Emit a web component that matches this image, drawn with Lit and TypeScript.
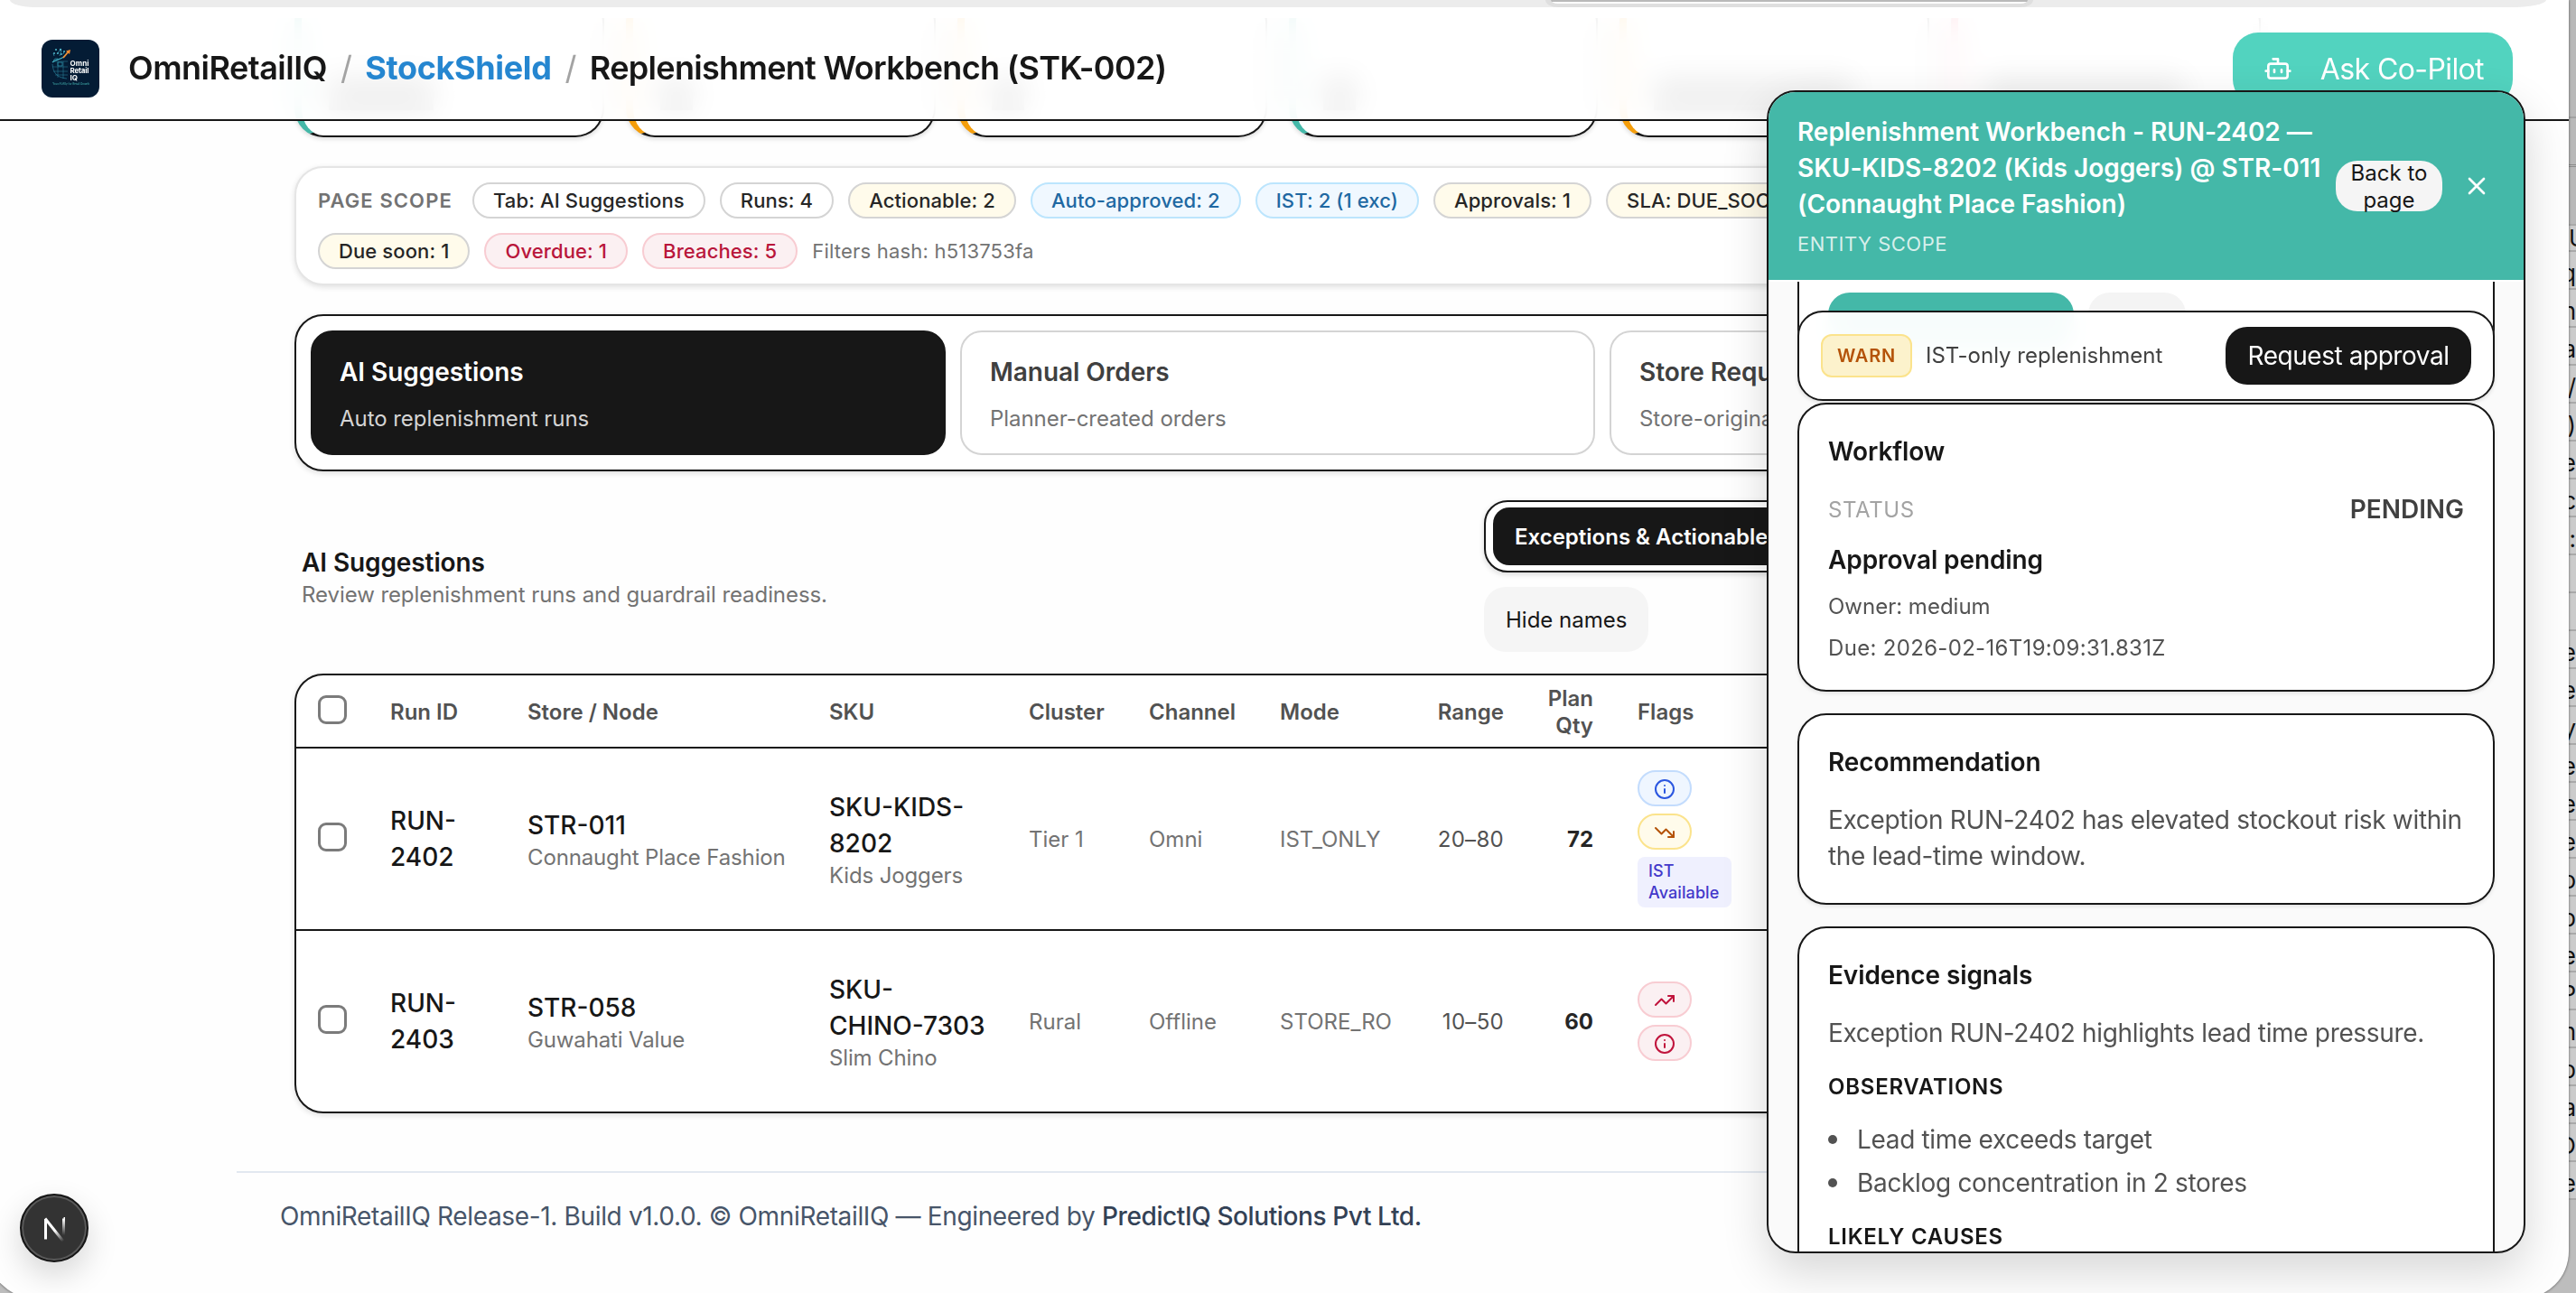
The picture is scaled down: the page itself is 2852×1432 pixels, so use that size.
import { LitElement, html, css, svg } from "lit";
import { customElement, property } from "lit/decorators.js";
import { classMap } from "lit/directives/class-map.js";

const ICONS = {
  info: svg`<circle cx="12" cy="12" r="10" /><path d="M12 16v-4M12 8h.01" />`,
  down: svg`<path d="M16 17h6v-6" /><path d="m22 17-8.5-8.5-5 5L2 7" />`,
  up: svg`<path d="M16 7h6v6" /><path d="m22 7-8.5 8.5-5-5L2 17" />`,
  bot: svg`<path d="M12 8V4H8" /><rect width="16" height="12" x="4" y="8" rx="2" /><path d="M2 14h2M20 14h2M15 13v2M9 13v2" />`,
  close: svg`<path d="M18 6 6 18M6 6l12 12" />`,
};

type IconName = keyof typeof ICONS;

@customElement("ui-icon")
export class UiIcon extends LitElement {
  static styles = css`
    :host {
      display: block;
      width: 24px;
      height: 24px;
      flex: none;
    }
    svg {
      display: block;
      width: 100%;
      height: 100%;
      fill: none;
      stroke: currentColor;
      stroke-width: 2;
      stroke-linecap: round;
      stroke-linejoin: round;
    }
  `;

  @property()
  public name: IconName = "info";

  render() {
    return html`<svg viewBox="0 0 24 24">${ICONS[this.name]}</svg>`;
  }
}

const KPIS = [
  { tone: "teal", ink: "wide" },
  { tone: "amber", ink: "small" },
  { tone: "amber", ink: "small" },
  { tone: "teal", ink: "small" },
  { tone: "amber", ink: "full" },
  { tone: "rose", ink: "full" },
];

const CHIPS = [
  { label: "Tab: AI Suggestions", tone: "plain" },
  { label: "Runs: 4", tone: "plain" },
  { label: "Actionable: 2", tone: "warn" },
  { label: "Auto-approved: 2", tone: "info" },
  { label: "IST: 2 (1 exc)", tone: "info" },
  { label: "Approvals: 1", tone: "warn" },
  { label: "SLA: DUE_SOON", tone: "warn" },
];

const CHIPS_BELOW = [
  { label: "Due soon: 1", tone: "warn" },
  { label: "Overdue: 1", tone: "danger" },
  { label: "Breaches: 5", tone: "danger" },
];

const TABS = [
  { title: "AI Suggestions", text: "Auto replenishment runs", active: true },
  { title: "Manual Orders", text: "Planner-created orders", active: false },
  { title: "Store Requests", text: "Store-originated requests", active: false },
];

const ROWS = [
  {
    run: ["RUN-", "2402"],
    store: "STR-011",
    storeName: "Connaught Place Fashion",
    sku: ["SKU-KIDS-", "8202"],
    skuName: "Kids Joggers",
    cluster: "Tier 1",
    channel: "Omni",
    mode: "IST_ONLY",
    range: "20–80",
    qty: "72",
    flags: [
      { icon: "info", tone: "blue" },
      { icon: "down", tone: "yellow" },
    ],
    ist: true,
  },
  {
    run: ["RUN-", "2403"],
    store: "STR-058",
    storeName: "Guwahati Value",
    sku: ["SKU-", "CHINO-7303"],
    skuName: "Slim Chino",
    cluster: "Rural",
    channel: "Offline",
    mode: "STORE_RO",
    range: "10–50",
    qty: "60",
    flags: [
      { icon: "up", tone: "red" },
      { icon: "info", tone: "red" },
    ],
    ist: false,
  },
];

// Rows of the window that lies behind this one
const BEHIND = [
  "q", "n", "ta", "/", ")", "e", "oc", ":", "", "", "ge", "e", "y",
  "e", "e", "e", "o", "p", "ee", "P", "n", "b", "a", "O", "te",
];

@customElement("app-drawer")
export class AppDrawer extends LitElement {
  static styles = css`
    :host {
      display: flex;
      flex-direction: column;
      box-sizing: border-box;
      border: 2px solid #171717;
      border-radius: 32px;
      background: #fafafa;
      overflow: hidden;
      box-shadow: 0 20px 50px rgba(0, 0, 0, 0.16);
      font-size: 28px;
      line-height: 40px;
      color: #525252;
    }
    * {
      box-sizing: border-box;
    }

    /* Header */
    .head {
      display: flex;
      align-items: center;
      height: 208px;
      flex: none;
      padding: 0 36px 0 32px;
      background: #44b8a8;
      color: #fff;
    }
    .title {
      width: 596px;
      font-weight: 600;
      letter-spacing: -0.04px;
      white-space: nowrap;
    }
    .scope {
      margin-top: 8px;
      font-size: 22px;
      line-height: 32px;
      font-weight: 400;
      letter-spacing: 0.5px;
      color: rgba(255, 255, 255, 0.8);
    }
    .back {
      display: flex;
      align-items: center;
      justify-content: center;
      width: 118px;
      height: 56px;
      padding-top: 2px;
      border-radius: 24px;
      background: #f5f5f5;
      color: #171717;
      font-size: 24px;
      line-height: 30px;
      text-align: center;
    }
    .close {
      width: 32px;
      height: 32px;
      margin-left: 22px;
    }

    /* Body */
    .body {
      flex: 1;
      min-height: 0;
      padding: 0 32px;
      border-top: 2px solid #fff;
      overflow: hidden;
    }
    .card {
      display: flex;
      flex-direction: column;
      padding: 32px;
      border: 2px solid #171717;
      border-radius: 32px;
      background: #fff;
      box-shadow: 0 2px 4px rgba(0, 0, 0, 0.1);
      margin-bottom: 24px;
    }
    .top {
      flex-direction: row;
      gap: 16px;
      height: 96px;
      margin: 0 0 -64px;
      padding: 12px 32px 0;
      border-top: 0;
      border-bottom: 0;
      border-radius: 0;
      box-shadow: none;
      background: linear-gradient(#fff 70px, transparent 70px);
      border-image: linear-gradient(#171717 60px, transparent 60px) 1;
    }
    .ghost {
      height: 64px;
      border-radius: 24px;
      background: #f4f4f4;
      width: 108px;
    }
    .ghost.teal {
      background: #44b8a8;
      width: 272px;
    }
    .bar {
      position: relative;
      display: flex;
      align-items: center;
      gap: 15px;
      height: 100px;
      padding: 0 24px;
      margin-bottom: 2px;
      border: 2px solid #171717;
      border-radius: 28px;
      background: rgba(255, 255, 255, 0.96);
      backdrop-filter: blur(12px);
      box-shadow: 0 2px 4px rgba(0, 0, 0, 0.12);
      font-size: 24px;
      color: #404040;
    }
    .warn {
      display: flex;
      align-items: center;
      justify-content: center;
      width: 101px;
      height: 48px;
      border: 2px solid #fbe38c;
      border-radius: 12px;
      background: #fcf2cc;
      color: #b45309;
      font-size: 20px;
      font-weight: 600;
      letter-spacing: 0.04em;
    }
    .approve {
      margin-left: auto;
      width: 272px;
      height: 64px;
      line-height: 64px;
      border-radius: 24px;
      background: #171717;
      color: #fff;
      font-size: 28px;
      letter-spacing: -0.45px;
      text-align: center;
    }
    .heading {
      color: #171717;
      font-weight: 600;
      letter-spacing: -0.1px;
      margin-bottom: 24px;
    }
    .text {
      letter-spacing: -0.33px;
      white-space: nowrap;
    }
    .status {
      display: flex;
      justify-content: space-between;
      font-weight: 600;
      letter-spacing: -0.05px;
      color: #404040;
    }
    .status .label {
      height: 40px;
      font-size: 24px;
      line-height: 42px;
      font-weight: 400;
      letter-spacing: 0.6px;
      color: #a3a3a3;
    }
    .state {
      color: #171717;
      font-weight: 600;
      letter-spacing: -0.1px;
      margin-top: 16px;
    }
    .meta {
      height: 30px;
      font-size: 24px;
      line-height: 32px;
      margin-top: 16px;
    }
    .due {
      letter-spacing: 0.32px;
    }
    .caps {
      height: 30px;
      margin: 24px 0;
      color: #171717;
      font-size: 24px;
      line-height: 32px;
      font-weight: 600;
      letter-spacing: 0.75px;
    }
    .list {
      display: flex;
      flex-direction: column;
      gap: 8px;
    }
    .item {
      display: flex;
      align-items: center;
      gap: 22px;
    }
    .item::before {
      content: "";
      width: 10px;
      height: 10px;
      border-radius: 50%;
      background: #525252;
    }
  `;

  render() {
    return html`
      <div class="head">
        <div class="title">
          Replenishment Workbench - RUN-2402 —<br />SKU-KIDS-8202 (Kids Joggers)
          @ STR-011<br />(Connaught Place Fashion)
          <div class="scope">ENTITY SCOPE</div>
        </div>
        <div class="back">Back to<br />page</div>
        <ui-icon class="close" name="close"></ui-icon>
      </div>
      <div class="body">
        <div class="card top">
          <div class="ghost teal"></div>
          <div class="ghost"></div>
        </div>
        <div class="bar">
          <span class="warn">WARN</span>
          <span>IST-only replenishment</span>
          <span class="approve">Request approval</span>
        </div>
        <section class="card">
          <div class="heading">Workflow</div>
          <div class="status">
            <span class="label">STATUS</span><span>PENDING</span>
          </div>
          <div class="state">Approval pending</div>
          <div class="meta">Owner: medium</div>
          <div class="meta due">Due: 2026-02-16T19:09:31.831Z</div>
        </section>
        <section class="card">
          <div class="heading">Recommendation</div>
          <div class="text">
            Exception RUN-2402 has elevated stockout risk within<br />the
            lead-time window.
          </div>
        </section>
        <section class="card">
          <div class="heading">Evidence signals</div>
          <div class="text">
            Exception RUN-2402 highlights lead time pressure.
          </div>
          <div class="caps">OBSERVATIONS</div>
          <div class="list">
            <div class="item text">Lead time exceeds target</div>
            <div class="item text">Backlog concentration in 2 stores</div>
          </div>
          <div class="caps">LIKELY CAUSES</div>
        </section>
      </div>
    `;
  }
}

@customElement("app-root")
export class AppRoot extends LitElement {
  static styles = css`
    :host {
      display: block;
      position: relative;
      width: 2852px;
      height: 1432px;
      overflow: hidden;
      background: #bdbdbd;
      font-family: Inter, "Liberation Sans", sans-serif;
      color: #171717;
    }
    * {
      box-sizing: border-box;
    }

    /* Window behind */
    .behind {
      position: absolute;
      top: 0;
      right: 0;
      width: 8px;
      overflow: hidden;
      padding-top: 129px;
      font-size: 26px;
      color: #111;
      background: linear-gradient(#b9b9b9 0 248px, #cbcbcb 248px 1330px, #c2c2c2 1330px);
    }
    .behind .gap {
      height: 56px;
      border-top: 2px solid #a2a2a2;
      border-bottom: 3px double #8c8c8c;
    }
    .behind .line {
      display: flex;
      justify-content: flex-end;
      align-items: center;
      height: 42px;
      padding-top: 6px;
      border-bottom: 2px solid #a9a9a9;
    }
    .behind .line.first {
      justify-content: flex-start;
      margin-top: 63px;
      height: 31px;
      padding: 0;
      border-top: 2px solid #a9a9a9;
    }

    /* Window */
    .window {
      position: relative;
      width: 2857px;
      height: 1438px;
      margin-left: -13px;
      padding-left: 13px;
      border-radius: 0 0 52px 52px;
      background: #fefefe;
      box-shadow: 0 0 3px rgba(0, 0, 0, 0.6);
      overflow: hidden;
    }
    .chrome {
      position: relative;
      z-index: 2;
      height: 20px;
      background: #fff;
    }
    .toolbar {
      display: flex;
      width: 2808px;
      height: 8px;
      margin-left: 11px;
      padding-left: 1700px;
      background: #ececec;
      border-radius: 0 0 40px 30px / 0 0 8px 8px;
    }
    .address {
      width: 540px;
      height: 8px;
      border: solid #dfdfdf;
      border-width: 0 6px 4px;
      border-radius: 0 0 14px 14px / 0 0 8px 8px;
      background: linear-gradient(#b9b9b9 2px, #fff 2px);
    }
    .header {
      position: relative;
      z-index: 2;
      display: flex;
      align-items: center;
      height: 114px;
      padding: 0 62px 0 46px;
      border-bottom: 2px solid #171717;
      background: rgba(255, 255, 255, 0.9);
      backdrop-filter: blur(16px);
    }
    .logo {
      width: 64px;
      height: 64px;
      margin-right: 32px;
    }
    .crumbs {
      display: flex;
      gap: 15px;
      font-size: 36px;
      line-height: 46px;
      padding-bottom: 2px;
      font-weight: 600;
      white-space: nowrap;
      letter-spacing: -0.019em;
    }
    .brand {
      letter-spacing: -0.014em;
    }
    .slash {
      color: #a3a3a3;
      font-weight: 400;
    }
    .link {
      color: #2586d0;
      font-weight: 700;
      letter-spacing: -0.01em;
    }
    .copilot {
      display: flex;
      align-items: center;
      justify-content: space-between;
      width: 310px;
      height: 80px;
      margin-left: auto;
      padding: 0 32px 0 34px;
      border-radius: 28px;
      background: #52d3bf;
      color: #fff;
      font-size: 32px;
      letter-spacing: -0.6px;
    }
    .copilot ui-icon {
      width: 32px;
      height: 32px;
    }

    /* Content */
    .main {
      width: 2177px;
      margin-left: 326px;
    }
    .kpis {
      display: grid;
      grid-template-columns: repeat(6, 1fr);
      gap: 24px;
      height: 160px;
      margin-top: -142px;
    }
    .kpi {
      padding: 92px 30px 0;
      border: 2px solid #171717;
      border-left-width: 8px;
      border-radius: 32px;
      background: #fff;
      box-shadow: 0 2px 5px rgba(0, 0, 0, 0.14);
    }
    .teal {
      border-left-color: #44b8a8;
    }
    .amber {
      border-left-color: #f59e0b;
    }
    .rose {
      border-left-color: #f43f5e;
    }
    .ink {
      width: 36px;
      height: 36px;
      background: #555;
    }
    .ink.wide {
      width: 116px;
    }
    .ink.full {
      width: 220px;
    }
    .scope {
      height: 132px;
      margin-top: 32px;
      padding: 16px 24px;
      display: flex;
      flex-direction: column;
      gap: 16px;
      border: 2px solid #e5e5e5;
      border-radius: 32px;
      background: #fff;
      box-shadow: 0 2px 6px rgba(0, 0, 0, 0.12);
      font-size: 22px;
    }
    .line {
      display: flex;
      align-items: center;
      gap: 16px;
      white-space: nowrap;
    }
    .scope-label {
      width: 155px;
      font-weight: 600;
      letter-spacing: 0.05em;
      color: #737373;
    }
    .hash {
      color: #737373;
      letter-spacing: 0.2px;
    }
    .chip {
      display: flex;
      align-items: center;
      height: 40px;
      padding: 0 21px;
      border: 2px solid #d4d4d4;
      border-radius: 20px;
      font-weight: 500;
      letter-spacing: 0.11px;
      color: #262626;
    }
    .chip.warn {
      background: #fffbeb;
    }
    .chip.info {
      background: #f0f8ff;
      border-color: #bce5fd;
      color: #2068a2;
    }
    .chip.danger {
      background: #fbf0f2;
      border-color: #f8ccd2;
      color: #b9163b;
    }
    .tabs {
      display: grid;
      grid-template-columns: repeat(3, 1fr);
      gap: 16px;
      height: 174px;
      margin-top: 32px;
      padding: 16px;
      border: 2px solid #171717;
      border-radius: 32px;
      background: #fff;
      box-shadow: 0 2px 6px rgba(0, 0, 0, 0.14);
    }
    .tab {
      padding: 24px 31px 20px;
      border: 2px solid #d4d4d4;
      border-radius: 24px;
      font-size: 28px;
      line-height: 40px;
      font-weight: 600;
      letter-spacing: -0.05px;
      color: #404040;
    }
    .tab .sub {
      margin-top: 17px;
      font-size: 24px;
      line-height: 30px;
      font-weight: 400;
      letter-spacing: -0.05px;
      color: #737373;
    }
    .tab.active {
      padding-left: 30px;
      background: #171717;
      border-color: #171717;
      color: #fff;
    }
    .tab.active .sub {
      color: #d4d4d4;
    }
    .section {
      display: flex;
      align-items: center;
      justify-content: space-between;
      height: 168px;
      margin-top: 32px;
      padding-left: 8px;
    }
    .section-title {
      font-size: 28px;
      line-height: 40px;
      font-weight: 600;
      letter-spacing: -0.1px;
    }
    .section-sub {
      height: 30px;
      font-size: 24px;
      line-height: 32px;
      letter-spacing: -0.07px;
      color: #737373;
    }
    .controls {
      display: flex;
      flex-direction: column;
      align-items: flex-start;
      gap: 16px;
      width: 860px;
      font-size: 24px;
    }
    .segment {
      height: 80px;
      width: 600px;
      padding: 6px 8px;
      border: 2px solid #171717;
      border-radius: 26px;
      background: #fff;
      box-shadow: 0 2px 6px rgba(0, 0, 0, 0.16);
    }
    .segment-on {
      height: 64px;
      line-height: 66px;
      padding-left: 24px;
      border-radius: 18px;
      background: #171717;
      color: #fff;
      font-weight: 600;
    }
    .hide {
      height: 72px;
      line-height: 74px;
      padding: 0 24px;
      border-radius: 24px;
      background: #f5f5f5;
    }

    /* Table */
    .table {
      margin-top: 24px;
      border: 2px solid #171717;
      border-radius: 32px;
      background: #fff;
      box-shadow: 0 2px 6px rgba(0, 0, 0, 0.14);
      font-size: 24px;
      line-height: 30px;
      color: #737373;
      white-space: nowrap;
    }
    .row {
      display: grid;
      grid-template-columns: 80px 152px 334px 221px 133px 145px 160px 136px 99px 1fr;
      align-items: center;
      height: 202px;
      border-top: 2px solid #171717;
    }
    .row > div {
      padding: 0 24px;
    }
    .row > .cell {
      padding-top: 2px;
    }
    .row > div:last-child {
      padding-left: 25px;
    }
    .row.head {
      height: 79px;
      border-top: 0;
      color: #525252;
      font-weight: 600;
    }
    .row.head > .lift {
      padding-bottom: 4px;
    }
    .right {
      text-align: right;
    }
    .check {
      width: 32px;
      height: 32px;
      border: 3px solid #7b7b7b;
      border-radius: 9px;
    }
    .row:not(.head) .check {
      margin-top: -4px;
    }
    .strong {
      font-size: 28px;
      line-height: 40px;
      font-weight: 500;
      color: #171717;
    }
    .name {
      height: 30px;
      line-height: 32px;
      letter-spacing: -0.14px;
    }
    .range {
      color: #525252;
      letter-spacing: 0.3px;
    }
    .qty {
      font-weight: 700;
      color: #262626;
    }
    .flags {
      display: flex;
      flex-direction: column;
      align-items: flex-start;
      gap: 8px;
    }
    .flag {
      padding: 7px 16px 5px;
      height: 40px;
      border: 2px solid;
      border-radius: 20px;
    }
    .flag.blue {
      background: #eff6ff;
      border-color: #c3dcfd;
    }
    .flag.yellow {
      background: #fffbeb;
      border-color: #fbe38c;
    }
    .flag.red {
      background: #fbf0f2;
      border-color: #f8ccd2;
    }
    .blue ui-icon {
      color: #2a56e0;
    }
    .yellow ui-icon {
      color: #b45309;
    }
    .red ui-icon {
      color: #c0143c;
    }
    .ist {
      width: 104px;
      padding: 4px 12px;
      border-radius: 8px;
      background: #eff0fe;
      color: #4338ca;
      font-size: 18px;
      line-height: 24px;
      font-weight: 500;
      letter-spacing: 0.1px;
    }

    /* Footer */
    .footer {
      margin: 64px 262px 0;
      padding: 26px 48px;
      border-top: 2px solid #e2e8f0;
      font-size: 28px;
      line-height: 44px;
      letter-spacing: -0.35px;
      color: #475569;
    }
    .company {
      color: #334155;
      font-weight: 500;
      letter-spacing: -0.4px;
    }

    /* Overlays */
    .badge {
      position: absolute;
      left: 35px;
      top: 1322px;
      width: 76px;
      height: 76px;
      border: 2px solid #161616;
      border-radius: 50%;
      background: #333;
      box-shadow: inset 0 0 0 2px #5a5a5a, 0 14px 34px rgba(0, 0, 0, 0.16);
    }
    .badge svg {
      display: block;
      width: 72px;
      height: 72px;
      fill: none;
      stroke-width: 3;
    }
    .drawer {
      position: absolute;
      z-index: 3;
      left: 1969px;
      top: 100px;
      width: 840px;
      height: 1288px;
    }
  `;

  renderChip(chip: { label: string; tone: string }) {
    return html`<span class="chip ${chip.tone}">${chip.label}</span>`;
  }

  renderLogo() {
    return html`
      <svg class="logo" viewBox="0 0 64 64">
        <rect width="64" height="64" rx="12" fill="#041c35" />
        <g fill="none" stroke="#2f8fa8" stroke-width="0.8">
          <path d="M12 27c1 10 5 15 16 16" opacity=".7" />
          <path d="M13 24h16M12 30h17M13 35h16M15 39h14M18 24v18M24 24v19" opacity=".6" />
          <path d="M13 23l2-2h3M18 25h5v4h-5zM14 18l-1-3M17 16l3-4M20 18l2-6M24 16l1-3" />
        </g>
        <g fill="#4fb3c8">
          <circle cx="14" cy="15" r="1" /><circle cx="16" cy="11" r="1.1" />
          <circle cx="21" cy="11" r="1.2" /><circle cx="25" cy="13" r="1" />
          <circle cx="18" cy="15" r="1" /><circle cx="22" cy="16" r="1" />
        </g>
        <path d="M12 25c6-5 11-1 18-13" fill="none" stroke="#45b7c9" stroke-width="1.2" />
        <path d="M24 20l6-7" fill="none" stroke="#f28a2e" stroke-width="1.7" />
        <path d="M32 11l-1 5-4-3.6z" fill="#f28a2e" />
        <g fill="#fff" font-family="Inter" font-weight="700" font-size="8">
          <text x="31.5" y="29.3" textLength="21">Omni</text>
          <text x="31.5" y="37.3" textLength="21">Retail</text>
          <text x="31.5" y="45.3">IQ</text>
        </g>
        <text x="12.3" y="49.8" textLength="41" font-family="Inter" font-weight="600" font-size="2.8" fill="#3fa6a6">Your AI Ally for Retail Growth</text>
      </svg>
    `;
  }

  renderBadge() {
    return html`
      <div class="badge">
        <svg viewBox="0 0 72 72">
          <defs>
            <linearGradient id="slant" gradientUnits="userSpaceOnUse" x1="38" y1="38" x2="47" y2="50">
              <stop offset="0" stop-color="#fff" />
              <stop offset="1" stop-color="#fff" stop-opacity="0" />
            </linearGradient>
            <linearGradient id="stem" gradientUnits="userSpaceOnUse" x1="0" y1="26" x2="0" y2="44">
              <stop offset="0" stop-color="#fff" />
              <stop offset="1" stop-color="#fff" stop-opacity="0" />
            </linearGradient>
          </defs>
          <path d="M26.5 48.500V26" stroke="#fff" />
          <path d="M26 25.500L47 52" stroke="url(#slant)" />
          <path d="M46.500 25.500h.01V44" stroke="url(#stem)" />
        </svg>
      </div>
    `;
  }

  renderRow(row: (typeof ROWS)[number]) {
    return html`
      <div class="row">
        <div><div class="check"></div></div>
        <div class="strong">${row.run[0]}<br />${row.run[1]}</div>
        <div>
          <div class="strong">${row.store}</div>
          <div class="name">${row.storeName}</div>
        </div>
        <div>
          <div class="strong">${row.sku[0]}<br />${row.sku[1]}</div>
          <div class="name">${row.skuName}</div>
        </div>
        <div class="cell">${row.cluster}</div>
        <div class="cell">${row.channel}</div>
        <div class="cell">${row.mode}</div>
        <div class="cell right range">${row.range}</div>
        <div class="cell right qty">${row.qty}</div>
        <div class="flags">
          ${row.flags.map(
            (flag) => html`
              <span class="flag ${flag.tone}">
                <ui-icon name=${flag.icon}></ui-icon>
              </span>
            `
          )}
          ${row.ist ? html`<span class="ist">IST<br />Available</span>` : undefined}
        </div>
      </div>
    `;
  }

  render() {
    return html`
      <div class="behind">
        <div class="gap"></div>
        <div class="line first">U</div>
        ${BEHIND.map((text) => html`<div class="line">${text}</div>`)}
      </div>
      <div class="window">
        <div class="chrome">
          <div class="toolbar"><div class="address"></div></div>
        </div>
        <header class="header">
          ${this.renderLogo()}
          <div class="crumbs">
            <span class="brand">OmniRetailIQ</span>
            <span class="slash">/</span>
            <span class="link">StockShield</span>
            <span class="slash">/</span>
            <span>Replenishment Workbench (STK-002)</span>
          </div>
          <div class="copilot">
            <ui-icon name="bot"></ui-icon><span>Ask Co-Pilot</span>
          </div>
        </header>
        <main class="main">
          <div class="kpis">
            ${KPIS.map(
              (kpi) => html`
                <div class="kpi ${kpi.tone}"><div class="ink ${kpi.ink}"></div></div>
              `
            )}
          </div>
          <div class="scope">
            <div class="line">
              <span class="scope-label">PAGE SCOPE</span>
              ${CHIPS.map(this.renderChip)}
            </div>
            <div class="line">
              ${CHIPS_BELOW.map(this.renderChip)}
              <span class="hash">Filters hash: h513753fa</span>
            </div>
          </div>
          <div class="tabs">
            ${TABS.map(
              (tab) => html`
                <div class=${classMap({ tab: true, active: tab.active })}>
                  ${tab.title}
                  <div class="sub">${tab.text}</div>
                </div>
              `
            )}
          </div>
          <div class="section">
            <div>
              <div class="section-title">AI Suggestions</div>
              <div class="section-sub">
                Review replenishment runs and guardrail readiness.
              </div>
            </div>
            <div class="controls">
              <div class="segment">
                <div class="segment-on">Exceptions &amp; Actionable</div>
              </div>
              <div class="hide">Hide names</div>
            </div>
          </div>
          <div class="table">
            <div class="row head">
              <div class="lift"><div class="check"></div></div>
              <div class="cell">Run ID</div>
              <div class="cell">Store / Node</div>
              <div class="cell">SKU</div>
              <div class="cell">Cluster</div>
              <div class="cell">Channel</div>
              <div class="cell">Mode</div>
              <div class="cell right">Range</div>
              <div class="cell right">Plan<br />Qty</div>
              <div class="cell">Flags</div>
            </div>
            ${ROWS.map(this.renderRow)}
          </div>
        </main>
        <footer class="footer">
          OmniRetailIQ Release-1. Build v1.0.0. © OmniRetailIQ — Engineered by
          <span class="company">PredictIQ Solutions Pvt Ltd.</span>
        </footer>
        ${this.renderBadge()}
        <app-drawer class="drawer"></app-drawer>
      </div>
    `;
  }
}
